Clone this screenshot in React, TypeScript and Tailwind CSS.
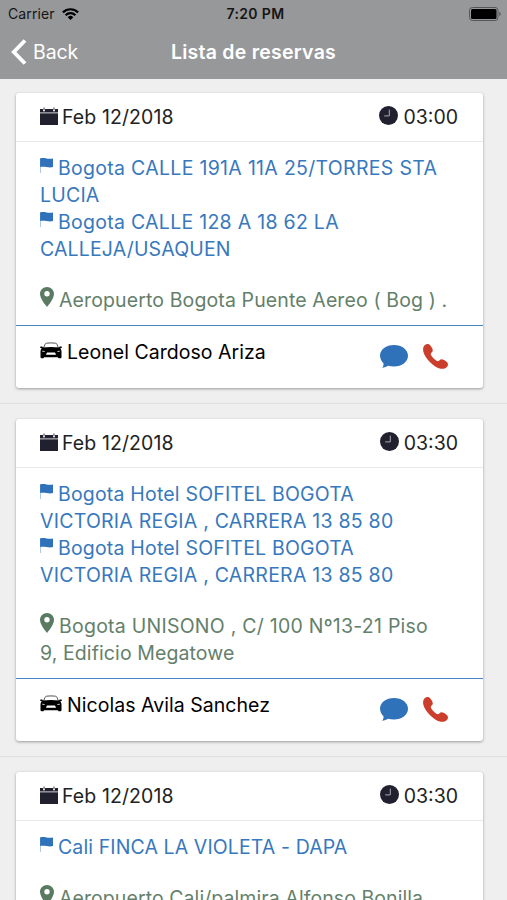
import React from "react";

const CalendarIcon = () => (
  <svg className="h-[18px] w-[18px] shrink-0" viewBox="0 0 18 18" fill="#20202f">
    <path d="M0 6.300h18V18H0z" />
    <path d="M0 2h3v1.400a1 1 0 0 0 2 0V2h8v1.400a1 1 0 0 0 2 0V2h3v3.500H0z" />
    <path d="M3.600.6h.9v2.600h-.9zM13.500.6h.9v2.600h-.9z" />
  </svg>
);

const ClockIcon = () => (
  <svg className="h-[19px] w-[19px] shrink-0" viewBox="0 0 19 19">
    <circle cx="9.500" cy="9.500" r="9.500" fill="#20202f" />
    <path d="M10.300 3.600v6.300H5.200" fill="none" stroke="#aaaab4" strokeWidth="1" />
  </svg>
);

const FlagIcon = () => (
  <svg className="mr-[5px] mb-[2px] inline-block h-[15px] w-[13px] align-baseline" viewBox="0 0 13 15">
    <path d="M.4.4v14.600" stroke="#8fb3dc" strokeWidth=".8" />
    <path d="M.1.500C2-.1 4.200 0 6.500.500S11 .9 13 .400v8.700c-2 .5-4.200.4-6.500 0S2 8.500.1 9z" fill="#2f72ba" />
  </svg>
);

const PinIcon = () => (
  <svg className="mr-[5px] inline-block h-[20px] w-[14px] align-baseline" viewBox="0 0 14 20">
    <path
      fill="#5a7a62"
      fillRule="evenodd"
      d="M7 0C3.100 0 0 3 0 6.800 0 11.500 5 17.500 7 20c2-2.500 7-8.500 7-13.200C14 3 10.900 0 7 0zm0 9.500a2.700 2.700 0 1 1 0-5.400 2.700 2.700 0 0 1 0 5.400z"
    />
  </svg>
);

const CarIcon = () => (
  <svg className="h-[17px] w-[22px] shrink-0" viewBox="0 0 22 17">
    <path d="M3.400 6.500 5 2.400Q5.300 1.400 6.500 1.200q4.500-.6 9 0 1.200.2 1.500 1.200l1.600 4.100" fill="none" stroke="#555" strokeWidth="1" />
    <path
      fill="#000"
      fillRule="evenodd"
      d="M0 5.300q0-.8 1-.8h1.300l.6 1.100q8.100-1 16.200 0l.6-1.100H21q1 0 1 .8 0 .7-1 .8l-.7.200q1.200 1.500 1.200 3.200V15q0 1.200-1 1.200h-1.600q-.9 0-.9-1H4q0 1-.9 1H1.500q-1 0-1-1.200V9.500q0-1.700 1.200-3.200L1 6.100q-1-.1-1-.8zM2.200 8.700v.8l3 .5q-.8-1.200-3-1.300zm17.600 0q-2.200.1-3 1.300l3-.5zM7 10.500 5.900 12.800h10.200L15 10.500z"
    />
  </svg>
);

const ChatIcon = () => (
  <svg className="h-[23px] w-[28px]" viewBox="0 0 28 24" preserveAspectRatio="none">
    <path
      fill="#2f72ba"
      d="M14 0C6.200 0 0 4.800 0 11c0 3.500 1.500 6 3.500 8 .3 1.500-.3 3.200-1.300 4.700 2.300-.3 4.200-1 5.700-2.100 1.900.6 3.900.8 6.100.8 7.800 0 14-4.800 14-11.200S21.800 0 14 0z"
    />
  </svg>
);

const CallIcon = () => (
  <svg className="-mt-px h-[25px] w-[25px]" viewBox="0 0 25 25">
    <path
      fill="#cb3e2c"
      d="M2.200.8C4-.4 6 0 7.300 1.500c1.300 1.500 2.500 3.500 2.500 5 0 1.500-1.800 2-2 3.400-.1 1.200 1.500 3.100 3.200 4.800 1.500 1.500 3 2.600 4.100 2.500 1.300-.2 1.700-2 3.400-2 1.500 0 3.500 1.200 5 2.500 1.500 1.200 2 3 .8 4.800-1.400 2-3.800 2.600-6.500 2.200-3.800-.6-7.500-3.300-10.700-6.500C3.900 15 1 11 .3 7.500-.2 4.500.2 2.200 2.200.8z"
    />
  </svg>
);

type Line = { text: string; flag?: boolean; cls?: string };
type Booking = { time: string; stops: Line[]; place: Line[]; driver: string };

const bookings: Booking[] = [
  {
    time: "03:00",
    stops: [
      { text: "Bogota CALLE 191A 11A 25/TORRES STA", flag: true, cls: "tracking-[0.3px]" },
      { text: "LUCIA", cls: "tracking-[0.2px]" },
      { text: "Bogota CALLE 128 A 18 62 LA", flag: true, cls: "tracking-[0.28px]" },
      { text: "CALLEJA/USAQUEN", cls: "tracking-[0.15px]" },
    ],
    place: [{ text: "Aeropuerto Bogota Puente Aereo ( Bog ) .", cls: "tracking-[0.12px]" }],
    driver: "Leonel Cardoso Ariza",
  },
  {
    time: "03:30",
    stops: [
      { text: "Bogota Hotel SOFITEL BOGOTA", flag: true, cls: "tracking-[0.19px]" },
      { text: "VICTORIA REGIA , CARRERA 13 85 80", cls: "tracking-[0.24px]" },
      { text: "Bogota Hotel SOFITEL BOGOTA", flag: true, cls: "tracking-[0.19px]" },
      { text: "VICTORIA REGIA , CARRERA 13 85 80", cls: "tracking-[0.24px]" },
    ],
    place: [
      { text: "Bogota UNISONO , C/ 100 Nº13-21 Piso", cls: "tracking-[0.25px]" },
      { text: "9, Edificio Megatowe", cls: "tracking-[0.1px]" },
    ],
    driver: "Nicolas Avila Sanchez",
  },
  {
    time: "03:30",
    stops: [{ text: "Cali FINCA LA VIOLETA - DAPA", flag: true, cls: "tracking-[0.11px]" }],
    place: [{ text: "Aeropuerto Cali/palmira Alfonso Bonilla", cls: "tracking-[0.08px]" }],
    driver: "",
  },
];

const Card = ({ b }: { b: Booking }) => (
  <li className="shrink-0 border-b border-[#dedede] pt-[15px] pr-6 pb-[15px] pl-4 first:pt-[14px]">
    <article className="rounded-[3px] bg-white shadow-[0_1px_3px_rgba(0,0,0,0.36)]">
      <header className="flex h-[49px] items-center justify-between border-b border-[#e8e8e8] pr-[25px] pl-6 text-[#222]">
        <div className="flex items-center gap-1">
          <span className="-mt-[3px] flex"><CalendarIcon /></span>
          <span className="tracking-[0.1px]">Feb 12/2018</span>
        </div>
        <div className="flex items-center gap-[5px]">
          <span className="-mt-1 flex"><ClockIcon /></span>
          <span>{b.time}</span>
        </div>
      </header>
      <div className="pt-[13px] pb-[11px] pl-6 whitespace-nowrap">
        <div className="text-[#3878bd]">
          {b.stops.map((l, i) => (
            <p key={i} className={l.cls}>
              {l.flag && <FlagIcon />}
              {l.text}
            </p>
          ))}
        </div>
        <div className="mt-6 text-[#64806b]">
          {b.place.map((l, i) => (
            <p key={i} className={l.cls}>
              {i === 0 && <PinIcon />}
              {l.text}
            </p>
          ))}
        </div>
      </div>
      {b.driver && (
        <footer className="flex h-[63px] items-start justify-between border-t border-t-[#4682c4] pr-[35px] pl-6">
          <div className="flex items-center gap-[5px] pt-[13px] text-black">
            <span className="-mt-[5px] flex"><CarIcon /></span>
            <span className="tracking-[0.04px]">{b.driver}</span>
          </div>
          <div className="flex gap-[15px] pt-[19px]">
            <ChatIcon />
            <CallIcon />
          </div>
        </footer>
      )}
    </article>
  </li>
);

export default function App() {
  return (
    <div className="flex h-[900px] w-[507px] flex-col overflow-hidden bg-[#efeff0] font-['Inter','Liberation_Sans',sans-serif] text-[19.5px] leading-[27px]">
      <div className="h-[79px] shrink-0 bg-[#97989a]">
        <div className="grid h-[27px] grid-cols-3 items-center pr-[6px] pl-[8px] text-[14px] text-[#151515]">
          <div className="flex items-center gap-[7px]">
            <span className="tracking-[0.1px]">Carrier</span>
            <svg className="h-[12px] w-[17px]" viewBox="0 0 17 12" fill="none" stroke="#000" strokeWidth="2.200">
              <path d="M.9 4.400a10.800 10.800 0 0 1 15.200 0M3.600 7.200a7 7 0 0 1 9.800 0" />
              <path d="M5.700 9.200a4 4 0 0 1 5.600 0L8.500 12z" fill="#000" stroke="none" />
            </svg>
          </div>
          <span className="pl-[2px] text-center font-semibold tracking-[0.35px] whitespace-nowrap">7:20 PM</span>
          <svg className="h-[14px] w-[32px] justify-self-end" viewBox="0 0 32 14">
            <rect x=".5" y=".5" width="28.500" height="13" rx="3" fill="none" stroke="#555657" />
            <rect x="2" y="2" width="25.500" height="10" rx="1.500" fill="#000" />
            <path d="M30.300 4.800q1.400.7 1.400 2.200t-1.400 2.200z" fill="#555657" />
          </svg>
        </div>
        <div className="grid h-[50px] grid-cols-3 items-center px-[11px] text-white">
          <div className="flex items-center gap-[6px]">
            <svg className="h-[26px] w-[16px]" viewBox="0 0 16 26" fill="none" stroke="#fff" strokeWidth="3.800">
              <path d="M14 1.500 2.800 13 14 24.500" />
            </svg>
            <span className="tracking-[-0.1px]">Back</span>
          </div>
          <h1 className="justify-self-center font-semibold tracking-[0.25px] whitespace-nowrap">Lista de reservas</h1>
        </div>
      </div>
      <ul className="flex min-h-0 flex-1 flex-col overflow-hidden">
        {bookings.map((b, i) => (
          <Card key={i} b={b} />
        ))}
      </ul>
    </div>
  );
}
